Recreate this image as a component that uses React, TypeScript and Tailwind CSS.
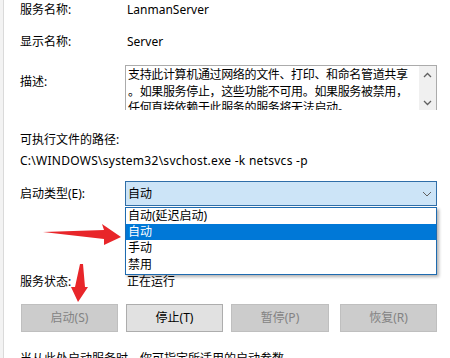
import * as React from "react";

const FONT = { fontFamily: '"Noto Sans", "Noto Sans CJK SC", sans-serif' };

function Chevron() {
  return (
    <svg width="10" height="6" viewBox="0 0 10 6" className="text-[#606060]">
      <path d="M1 1 L5 5 L9 1" fill="none" stroke="currentColor" strokeWidth="1" />
    </svg>
  );
}

function SmallArrow({ up }: { up?: boolean }) {
  return (
    <svg width="9" height="6" viewBox="0 0 9 6" className="text-[#606060]">
      <path d={up ? "M1 5 L4.5 1.5 L8 5" : "M1 1 L4.5 4.5 L8 1"} fill="none" stroke="currentColor" strokeWidth="1.3" />
    </svg>
  );
}

function Btn({ label, enabled, className }: { label: string; enabled?: boolean; className?: string }) {
  return (
    <div
      className={
        "h-[28px] w-[97px] flex items-center justify-center text-[12px] border " +
        (enabled ? "bg-[#e1e1e1] border-[#adadad] text-black " : "bg-[#cccccc] border-[#bfbfbf] text-[#838383] ") +
        (className || "")
      }
    >
      {label}
    </div>
  );
}

export default function App() {
  return (
    <div className="relative w-[450px] h-[358px] overflow-hidden bg-white flex text-black" style={FONT}>
      {/* left edge of the window */}
      <div className="w-[4px] shrink-0 bg-[#f3f3f3] border-r border-[#dadada]" />

      <div className="flex flex-col pl-[16px] text-[12px] leading-[20px]">
        <div className="flex h-[20px] items-center">
          <span className="w-[107px]">服务名称:</span>
          <span>LanmanServer</span>
        </div>
        <div className="flex h-[20px] items-center mt-[12px]">
          <span className="w-[107px]">显示名称:</span>
          <span>Server</span>
        </div>

        <div className="flex mt-[13px]">
          <span className="w-[105px] pt-[7px]">描述:</span>
          <div className="w-[312px] h-[45px] border border-[#ababab] border-b-0 flex overflow-hidden">
            <div className="flex-1 pl-[2px] pt-[1px] leading-[16.5px] overflow-hidden whitespace-nowrap tracking-[-0.35px]">
              <div>支持此计算机通过网络的文件、打印、和命名管道共享</div>
              <div>。如果服务停止，这些功能不可用。如果服务被禁用，</div>
              <div>任何直接依赖于此服务的服务将无法启动。</div>
            </div>
            <div className="w-[17px] bg-[#f0f0f0] flex flex-col items-center justify-between pt-[6px] pb-[4px]">
              <SmallArrow up />
              <SmallArrow />
            </div>
          </div>
        </div>

        <div className="h-[20px] mt-[20px] flex items-center">可执行文件的路径:</div>
        <div className="h-[20px] mt-[1px] flex items-center tracking-[0.27px]">C:\WINDOWS\system32\svchost.exe -k netsvcs -p</div>

        <div className="flex items-center mt-[10px]">
          <span className="w-[105px]">启动类型(E):</span>
          <div className="w-[312px] h-[25px] bg-[#cce4f7] border border-[#2f6ea8] flex items-center justify-between pl-[2px] pr-[4px]">
            <span>自动</span>
            <Chevron />
          </div>
        </div>

        <div className="mt-[51px] h-px w-[416px] bg-[#a0a0a0]" />

        <div className="flex h-[20px] items-center mt-[15px]">
          <span className="w-[107px]">服务状态:</span>
          <span>正在运行</span>
        </div>

        <div className="flex mt-[12px] ml-[1px]">
          <Btn label="启动(S)" />
          <Btn label="停止(T)" enabled className="ml-[8px]" />
          <Btn label="暂停(P)" className="ml-[8px] w-[98px]" />
          <Btn label="恢复(R)" className="ml-[11px]" />
        </div>

        <div className="mt-[17px] whitespace-nowrap">当从此处启动服务时，你可指定所适用的启动参数。</div>
      </div>

      {/* open dropdown list */}
      <div className="absolute left-[125px] top-[207px] w-[312px] pb-[1px] bg-white border border-[#1e6bb0] shadow-[2px_2px_3px_rgba(0,0,0,0.3)] text-[12px]">
        <div className="h-[16px] leading-[16px] pl-[2px]">自动(延迟启动)</div>
        <div className="h-[16px] leading-[16px] pl-[2px] bg-[#0078d7] text-white">自动</div>
        <div className="h-[16.5px] leading-[16.5px] pl-[2px]">手动</div>
        <div className="h-[16.5px] leading-[16.5px] pl-[2px]">禁用</div>
      </div>

      {/* red annotation arrows */}
      <svg className="absolute left-0 top-0 pointer-events-none" width="450" height="358" viewBox="0 0 450 358">
        <path d="M43 232 L104 230 L102 224 L121 237 L104 245 L104 239 Z" fill="#e8262a" />
        <path d="M80 264 L83 264 L85 287 L88 287 L78 302 L71 287 L75 287 Z" fill="#e8262a" />
      </svg>
    </div>
  );
}
